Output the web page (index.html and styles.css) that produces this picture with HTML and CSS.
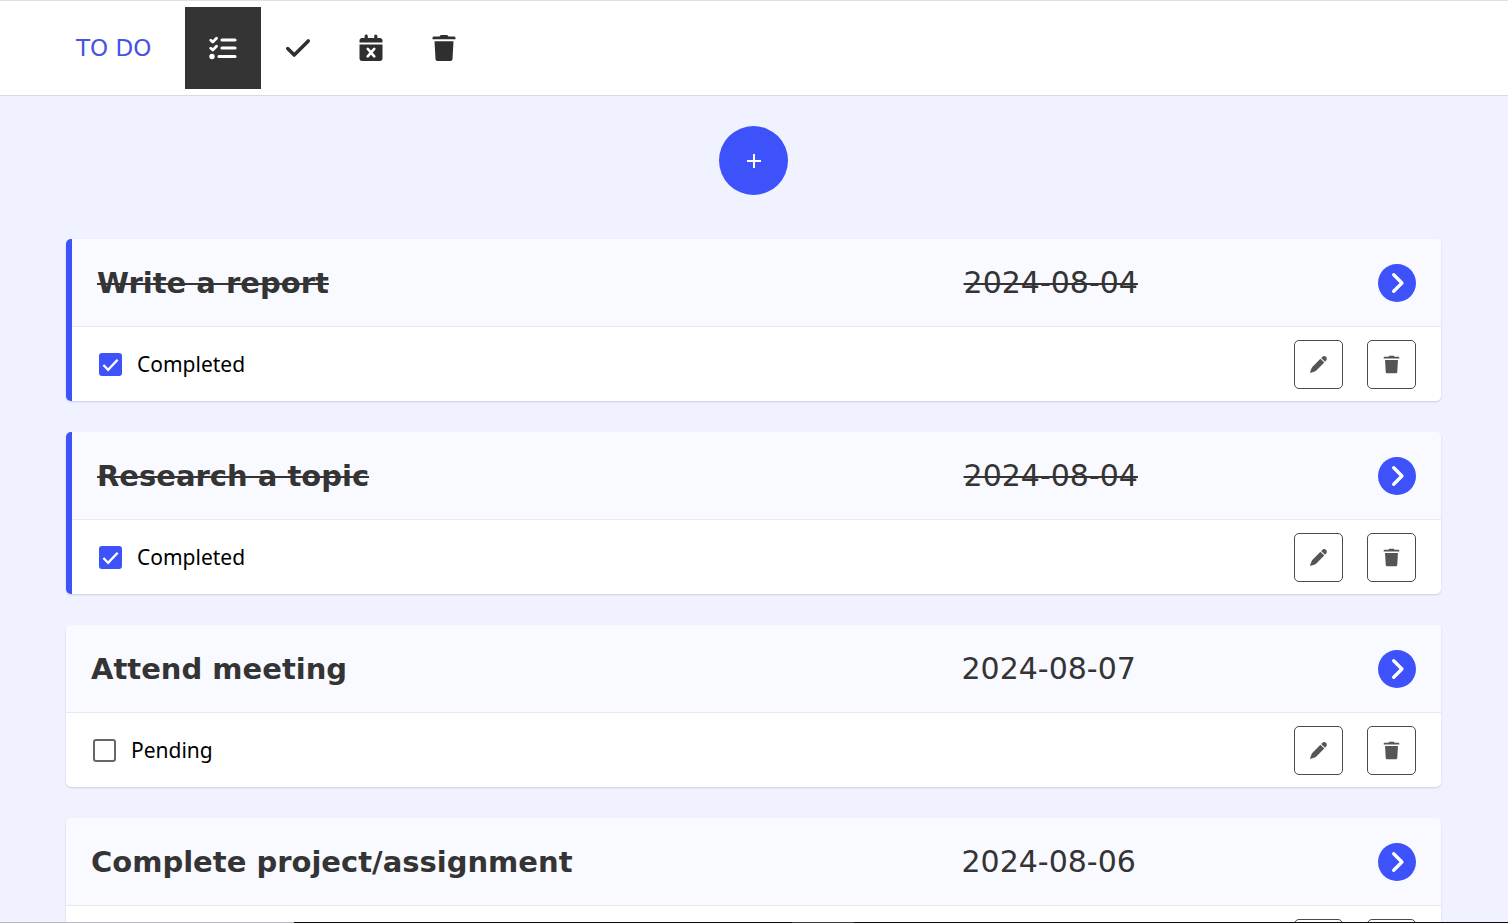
FILE: index.html
```html
<!DOCTYPE html>
<html lang="en">
<head>
<meta charset="utf-8">
<meta name="viewport" content="width=device-width, initial-scale=1">
<title>To do</title>
<link rel="stylesheet" href="styles.css">
</head>
<body>
<svg class="defs" aria-hidden="true">
  <symbol id="i-list" viewBox="0 0 28 24">
    <g fill="none" stroke="currentColor" stroke-width="2.800" stroke-linecap="round" stroke-linejoin="round">
      <path d="M1.800 4.200l2 1.800L7.500 2.200M1.800 12.200l2 1.800L7.500 10.200"/>
      <path d="M13 4H26M13 12H26M10 20.500H26" stroke-width="3.200"/>
    </g>
    <circle cx="3" cy="20.500" r="2.700" fill="currentColor"/>
  </symbol>
  <symbol id="i-check" viewBox="0 0 24 24">
    <path d="M2.500 12.500L8.500 18.500 21.500 5.500" fill="none" stroke="currentColor" stroke-width="3.200" stroke-linecap="round" stroke-linejoin="round"/>
  </symbol>
  <symbol id="i-calendar" viewBox="0 0 24 28">
    <path fill="currentColor" d="M7.200.5c.9 0 1.600.700 1.600 1.600V4h6.400V2.100a1.600 1.600 0 0 1 3.200 0V4H21c1.400 0 2.500 1.100 2.500 2.500v2H.5v-2C.5 5.100 1.600 4 3 4h2.600V2.100C5.600 1.200 6.300.5 7.200.5z"/>
    <path fill="currentColor" fill-rule="evenodd" d="M.5 10.500h23v14c0 1.400-1.100 2.500-2.500 2.500H3C1.600 27 .5 25.900.5 24.500zM9.700 13.900a1.300 1.300 0 0 0-1.900 1.900l2.500 2.800-2.500 2.800a1.300 1.300 0 0 0 1.900 1.900l2.300-2.600 2.300 2.600a1.300 1.300 0 0 0 1.900-1.900l-2.500-2.800 2.500-2.800a1.300 1.300 0 0 0-1.900-1.900L12 16.500z"/>
  </symbol>
  <symbol id="i-trash" viewBox="0 0 24 28">
    <path fill="currentColor" d="M8 1.700C8.200 1.200 8.700 1 9.200 1h5.600c.5 0 1 .2 1.200.7l.4.800H22c.9 0 1.500.6 1.500 1.400v1.300H.5V3.900c0-.8.600-1.400 1.500-1.400h5.600zM2.500 7.200h19l-1 17.700c-.1 1.300-1.100 2.100-2.400 2.100H5.900c-1.300 0-2.300-.8-2.400-2.100z"/>
  </symbol>
  <symbol id="i-pencil" viewBox="0 0 20 20">
    <path fill="currentColor" d="M14 2c1-1.200 2.800-1.300 3.900-.1s1.200 2.900.1 4l-1.100 1.200-4.100-4zM12 3.900l4.100 4.100-8.400 8.200c-.5.500-1 .8-1.600 1.100l-4.100 1.500c-.6.200-1-.2-.8-.8l1.500-4.100c.2-.6.500-1.100 1-1.600z"/>
  </symbol>
  <symbol id="i-chevron" viewBox="0 0 20 20">
    <path d="M7 2.500L14.500 10 7 17.500" fill="none" stroke="currentColor" stroke-width="3" stroke-linecap="round" stroke-linejoin="round"/>
  </symbol>
</svg>

<header class="navbar">
  <a class="brand" href="#">TO DO</a>
  <nav class="tabs">
    <a class="tab tab-active" href="#all" aria-label="All tasks"><svg class="tab-icon"><use href="#i-list"/></svg></a>
    <a class="tab" href="#completed" aria-label="Completed"><svg class="tab-icon tab-icon-check"><use href="#i-check"/></svg></a>
    <a class="tab" href="#overdue" aria-label="Overdue"><svg class="tab-icon"><use href="#i-calendar"/></svg></a>
    <a class="tab" href="#trash" aria-label="Deleted"><svg class="tab-icon"><use href="#i-trash"/></svg></a>
  </nav>
</header>

<main class="page">
  <button class="add" type="button" aria-label="Add task"><svg class="add-icon" viewBox="0 0 14 14"><path d="M7 0v14M0 7h14" stroke="currentColor" stroke-width="2"/></svg></button>

  <section class="tasks">
    <article class="task task-done">
      <div class="task-head">
        <h2 class="task-title">Write a report</h2>
        <time class="task-date">2024-08-04</time>
        <button class="expand" type="button" aria-label="Show details"><svg class="expand-icon"><use href="#i-chevron"/></svg></button>
      </div>
      <div class="task-body">
        <label class="status"><input class="status-box" type="checkbox" checked>Completed</label>
        <button class="action" type="button" aria-label="Edit"><svg class="action-icon"><use href="#i-pencil"/></svg></button>
        <button class="action" type="button" aria-label="Delete"><svg class="action-icon"><use href="#i-trash"/></svg></button>
      </div>
    </article>

    <article class="task task-done">
      <div class="task-head">
        <h2 class="task-title">Research a topic</h2>
        <time class="task-date">2024-08-04</time>
        <button class="expand" type="button" aria-label="Show details"><svg class="expand-icon"><use href="#i-chevron"/></svg></button>
      </div>
      <div class="task-body">
        <label class="status"><input class="status-box" type="checkbox" checked>Completed</label>
        <button class="action" type="button" aria-label="Edit"><svg class="action-icon"><use href="#i-pencil"/></svg></button>
        <button class="action" type="button" aria-label="Delete"><svg class="action-icon"><use href="#i-trash"/></svg></button>
      </div>
    </article>

    <article class="task">
      <div class="task-head">
        <h2 class="task-title">Attend meeting</h2>
        <time class="task-date">2024-08-07</time>
        <button class="expand" type="button" aria-label="Show details"><svg class="expand-icon"><use href="#i-chevron"/></svg></button>
      </div>
      <div class="task-body">
        <label class="status"><input class="status-box" type="checkbox">Pending</label>
        <button class="action" type="button" aria-label="Edit"><svg class="action-icon"><use href="#i-pencil"/></svg></button>
        <button class="action" type="button" aria-label="Delete"><svg class="action-icon"><use href="#i-trash"/></svg></button>
      </div>
    </article>

    <article class="task">
      <div class="task-head">
        <h2 class="task-title">Complete project/assignment</h2>
        <time class="task-date">2024-08-06</time>
        <button class="expand" type="button" aria-label="Show details"><svg class="expand-icon"><use href="#i-chevron"/></svg></button>
      </div>
      <div class="task-body">
        <span class="status"></span>
        <button class="action" type="button" aria-label="Edit"><svg class="action-icon"><use href="#i-pencil"/></svg></button>
        <button class="action" type="button" aria-label="Delete"><svg class="action-icon"><use href="#i-trash"/></svg></button>
      </div>
    </article>
  </section>
</main>
<div class="edge"></div>
</body>
</html>
```
FILE: styles.css
```css
:root {
  --blue: #3d52fa;
  --ink: #343434;
}

* { box-sizing: border-box; }

html { scrollbar-width: none; }

body {
  margin: 0;
  background: #f0f2ff;
  color: #000;
  font-family: "DejaVu Sans", Verdana, sans-serif;
}

.defs {
  position: absolute;
  width: 0;
  height: 0;
}

.navbar {
  display: flex;
  align-items: center;
  gap: 34px;
  padding: 6px 76px;
  background: #fff;
  border-top: 1px solid #e0e0e0;
  border-bottom: 1px solid #dcdce0;
}

.brand {
  color: #4654e0;
  font-size: 23px;
  line-height: 28px;
  text-decoration: none;
}

.tabs { display: flex; }

.tab {
  display: flex;
  align-items: center;
  justify-content: center;
  width: 73px;
  height: 82px;
  color: #2f2f2f;
}

.tab-active {
  width: 76px;
  background: var(--ink);
  color: #fff;
}

.tab-icon {
  width: 28px;
  height: 28px;
}

.tab-icon-check {
  width: 26px;
  height: 26px;
}

.page { padding: 30px 67px 31px 66px; }

.add {
  display: flex;
  align-items: center;
  justify-content: center;
  width: 69px;
  height: 69px;
  margin: 0 auto 44px;
  padding: 0;
  border: 0;
  border-radius: 50%;
  background: var(--blue);
  color: #fff;
}

.add-icon {
  width: 14px;
  height: 14px;
}

.tasks {
  display: flex;
  flex-direction: column;
  gap: 31px;
}

.task {
  background: #fff;
  border-radius: 5px;
  box-shadow: 0 1px 2px rgba(40, 45, 80, 0.18);
}

.task-done { border-left: 6px solid var(--blue); }

.task-head {
  display: grid;
  grid-template-columns: 65.7% 1fr auto;
  align-items: center;
  height: 88px;
  padding: 0 25px;
  background: #f9faff;
  border-bottom: 1px solid #e8e9f0;
  border-radius: 5px 5px 0 0;
  color: var(--ink);
}

.task-title {
  margin: 0;
  font-size: 29px;
  line-height: 36px;
}

.task-date {
  font-size: 30px;
  line-height: 36px;
}

.task-done .task-head { border-top-left-radius: 0; }

.task-done .task-title,
.task-done .task-date { text-decoration: line-through 2px; }

.expand {
  display: flex;
  align-items: center;
  justify-content: center;
  width: 38px;
  height: 38px;
  padding: 0;
  border: 0;
  border-radius: 50%;
  background: var(--blue);
  color: #fff;
}

.expand-icon {
  width: 22px;
  height: 22px;
}

.task-body {
  display: flex;
  align-items: center;
  gap: 24px;
  height: 74px;
  padding: 0 25px;
}

.status {
  display: flex;
  align-items: center;
  gap: 15px;
  margin-right: auto;
  font-family: "Noto Sans", sans-serif;
  font-size: 21px;
  line-height: 28px;
}

.status-box {
  appearance: none;
  width: 23px;
  height: 23px;
  margin: 0 0 0 2px;
  border: 2px solid #666;
  border-radius: 3px;
  background: #fff;
}

.status-box:checked {
  border-color: var(--blue);
  background: var(--blue) url("data:image/svg+xml,%3Csvg xmlns='http://www.w3.org/2000/svg' viewBox='0 0 20 20'%3E%3Cpath d='M2.500 10.500l5 5L17.500 5' fill='none' stroke='white' stroke-width='2.500'/%3E%3C/svg%3E") center / 19px no-repeat;
}

.action {
  display: flex;
  align-items: center;
  justify-content: center;
  width: 49px;
  height: 49px;
  padding: 0;
  border: 1px solid #4a4a4a;
  border-radius: 5px;
  background: #fff;
  color: #555;
}

.action-icon {
  width: 19px;
  height: 19px;
}

.edge {
  position: fixed;
  inset: auto 0 0;
  height: 1px;
  background: linear-gradient(90deg, #b8b8c2 19.5%, #0a0a0a 19.5% 52.5%, #3a3a3a 52.5% 56.6%, #0a0a0a 56.6%);
}
```
